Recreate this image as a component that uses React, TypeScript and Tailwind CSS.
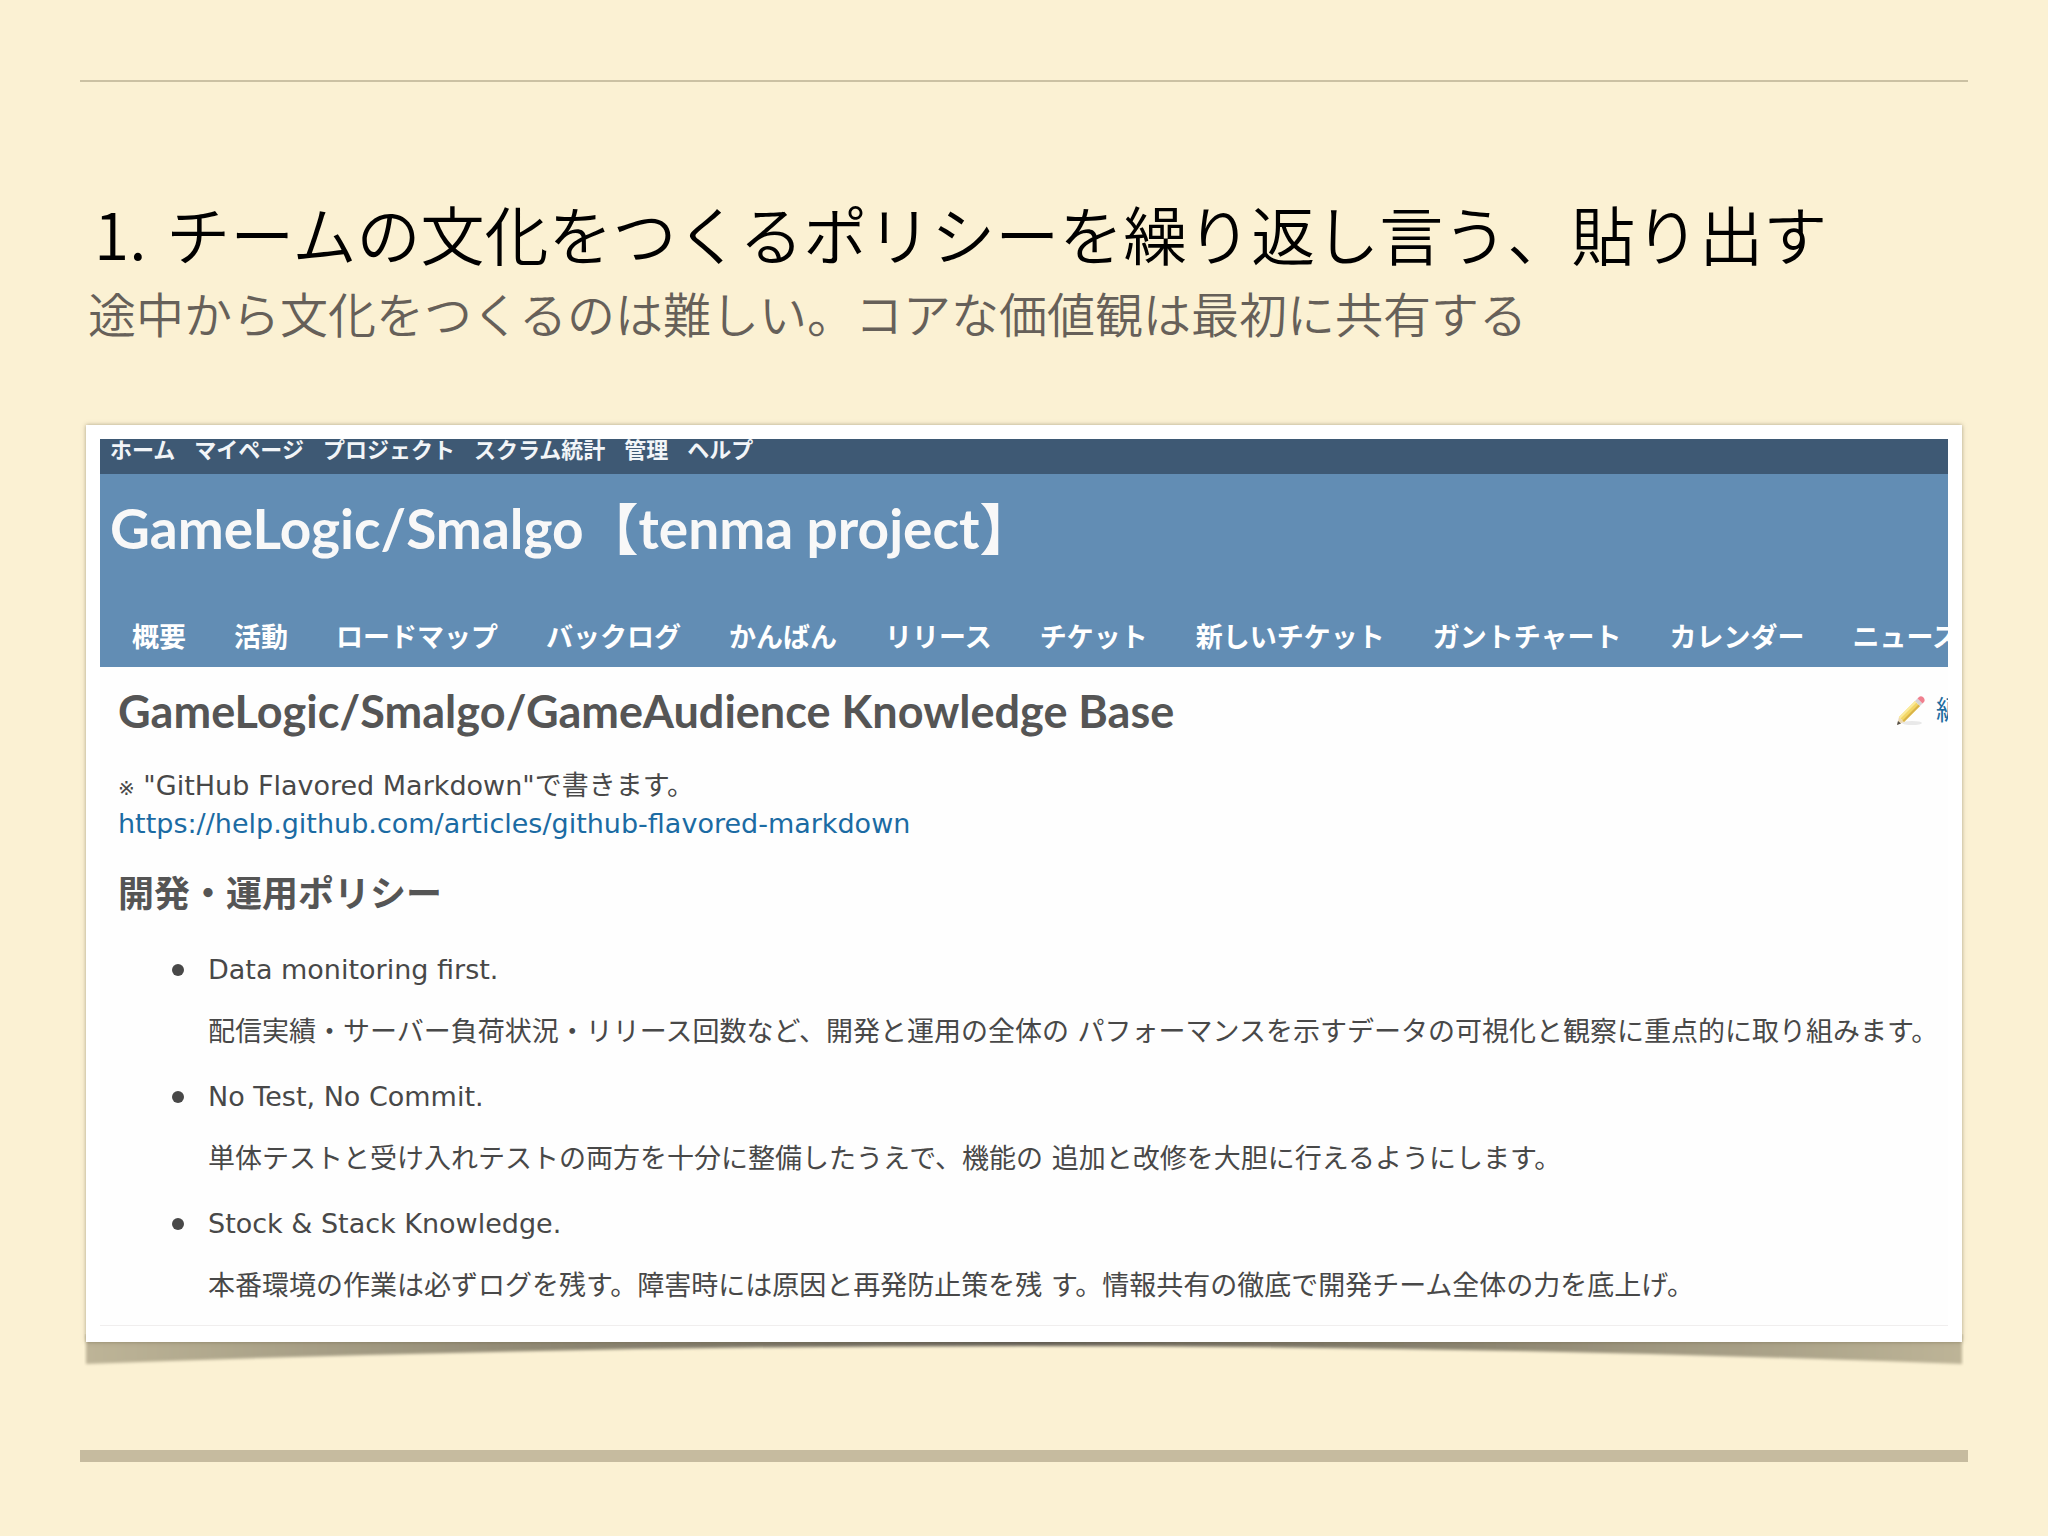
const topMenu = ["ホーム", "マイページ", "プロジェクト", "スクラム統計", "管理", "ヘルプ"];

const tabs = [
    "概要",
    "活動",
    "ロードマップ",
    "バックログ",
    "かんばん",
    "リリース",
    "チケット",
    "新しいチケット",
    "ガントチャート",
    "カレンダー",
    "ニュース",
];

const policies = [
    {
        title: "Data monitoring first.",
        body: "配信実績・サーバー負荷状況・リリース回数など、開発と運用の全体の パフォーマンスを示すデータの可視化と観察に重点的に取り組みます。",
    },
    {
        title: "No Test, No Commit.",
        body: "単体テストと受け入れテストの両方を十分に整備したうえで、機能の 追加と改修を大胆に行えるようにします。",
    },
    {
        title: "Stock & Stack Knowledge.",
        body: "本番環境の作業は必ずログを残す。障害時には原因と再発防止策を残 す。情報共有の徹底で開発チーム全体の力を底上げ。",
    },
];

function PencilIcon() {
    return (
        <svg viewBox="0 0 32 32" className="h-8 w-8 shrink-0" aria-hidden="true">
            <ellipse cx="17" cy="28" rx="10" ry="2" fill="#e9e9e9" />
            <path d="M2 30 L4 22 L9 27 Z" fill="#ecd9b4" />
            <path d="M2 30 L3 26 L6 28.500 Z" fill="#55504a" />
            <path d="M4 22 L20 6 L25 11 L9 27 Z" fill="#f3d766" />
            <path d="M4 22 L20 6 L21.500 7.500 L5.500 23.500 Z" fill="#fbeb9c" />
            <path d="M7.500 25.500 L23.500 9.500 L25 11 L9 27 Z" fill="#d9b348" />
            <path d="M20 6 L22.500 3.500 L27.500 8.500 L25 11 Z" fill="#d5d3d6" />
            <path d="M22.500 3.500 L24 2 Q26 0.500 28.500 2.500 Q30.500 5 29 7 L27.500 8.500 Z" fill="#f0808f" />
        </svg>
    );
}

/* Shadow of a sheet whose lower corners lift off the page */
function LiftedShadow() {
    return (
        <svg
            viewBox="0 0 1880 40"
            preserveAspectRatio="none"
            className="absolute top-full -left-[2px] -mt-2 h-10 w-[calc(100%+4px)]"
            aria-hidden="true"
        >
            <defs>
                <linearGradient id="lift" x1="0" x2="1" y1="0" y2="0">
                    <stop offset="0" stopColor="#bdb497" />
                    <stop offset="0.25" stopColor="#8f8873" />
                    <stop offset="0.5" stopColor="#66625a" />
                    <stop offset="0.75" stopColor="#8f8873" />
                    <stop offset="1" stopColor="#bdb497" />
                </linearGradient>
                <filter id="soften" x="-1%" y="-20%" width="102%" height="140%">
                    <feGaussianBlur stdDeviation="1.500" />
                </filter>
            </defs>
            <path d="M2 0 H1878 V30 Q1400 12 940 12 Q480 12 2 30 Z" fill="url(#lift)" filter="url(#soften)" />
        </svg>
    );
}

export default function App() {
    return (
        <main
            lang="ja"
            className="flex min-h-screen flex-col bg-[#fbf1d3] px-20 pt-20 pb-[74px] font-['Noto_Sans_CJK_JP',sans-serif]"
        >
            <hr className="border-t-2 border-[#cbc1a3]" />

            <header className="mt-[102px] px-2">
                <h1 className="flex gap-5 pl-[6px] text-[64px] leading-[96px] font-[350] text-black">
                    <span>1.</span>
                    <span>チームの文化をつくるポリシーを繰り返し言う、貼り出す</span>
                </h1>
                <p className="text-[48px] leading-[64px] font-[350] text-[#666059]">
                    途中から文化をつくるのは難しい。コアな価値観は最初に共有する
                </p>
            </header>

            <section className="relative mx-[6px] mt-[81px]">
                <LiftedShadow />
                <div className="relative bg-white px-[14px] pt-[14px] pb-4 shadow-[0_0_4px_rgba(90,80,50,0.5)]">
                    <div className="overflow-hidden border-b border-[#f0eeee] bg-[#fefefe]">
                        <nav className="flex h-[35px] gap-[19px] overflow-hidden bg-[#3e5974] px-[10px] text-[22px] leading-[18px] font-bold whitespace-nowrap text-[#f2f5f8]">
                            {topMenu.map((item) => (
                                <a key={item} href="#">
                                    {item}
                                </a>
                            ))}
                        </nav>

                        <div className="bg-[#628db4] pt-[18px] text-[#f8f8f8]">
                            <h2 className="px-[10px] font-['Lato','Noto_Sans_CJK_JP',sans-serif] text-[55px] leading-[72px] font-bold whitespace-nowrap">
                                GameLogic/Smalgo【tenma project】
                            </h2>
                            <nav className="mt-11 flex h-[59px] gap-12 overflow-hidden pl-8 text-[27px] leading-[56px] font-bold whitespace-nowrap text-white">
                                {tabs.map((tab) => (
                                    <a key={tab} href="#">
                                        {tab}
                                    </a>
                                ))}
                            </nav>
                        </div>

                        <article className="pt-[14px] pb-5 pl-[18px] font-['DejaVu_Sans','Noto_Sans_CJK_JP',sans-serif] text-[27px] leading-[38px] text-[#484848]">
                            <div className="flex items-center justify-between">
                                <h3 className="font-['Lato','Noto_Sans_CJK_JP',sans-serif] text-[45px] leading-[60px] font-bold text-[#555555]">
                                    GameLogic/Smalgo/GameAudience Knowledge Base
                                </h3>
                                <a href="#" className="flex w-[53px] items-center gap-[9px] overflow-hidden whitespace-nowrap text-[#1f6c9f]">
                                    <PencilIcon />
                                    編集
                                </a>
                            </div>

                            <p className="mt-[26px]">
                                <span className="text-[20px] leading-none">※</span> "GitHub Flavored Markdown"で書きます。
                            </p>
                            <p>
                                <a href="https://help.github.com/articles/github-flavored-markdown" className="text-[#1b6ba3]">
                                    https://help.github.com/articles/github-flavored-markdown
                                </a>
                            </p>

                            <h4 className="mt-7 text-[36px] leading-[48px] font-bold text-[#555555]">開発・運用ポリシー</h4>

                            <ul className="mt-8 flex flex-col gap-[27px] pl-[54px]">
                                {policies.map((policy) => (
                                    <li key={policy.title} className="flex gap-6">
                                        <span className="mt-[13px] h-3 w-3 shrink-0 rounded-full bg-[#484848]" />
                                        <div className="flex flex-col gap-6 whitespace-nowrap">
                                            <p>{policy.title}</p>
                                            <p>{policy.body}</p>
                                        </div>
                                    </li>
                                ))}
                            </ul>
                        </article>
                    </div>
                </div>
            </section>

            <div className="mt-[108px] h-3 bg-[#c6bb9f]" />
        </main>
    );
}
